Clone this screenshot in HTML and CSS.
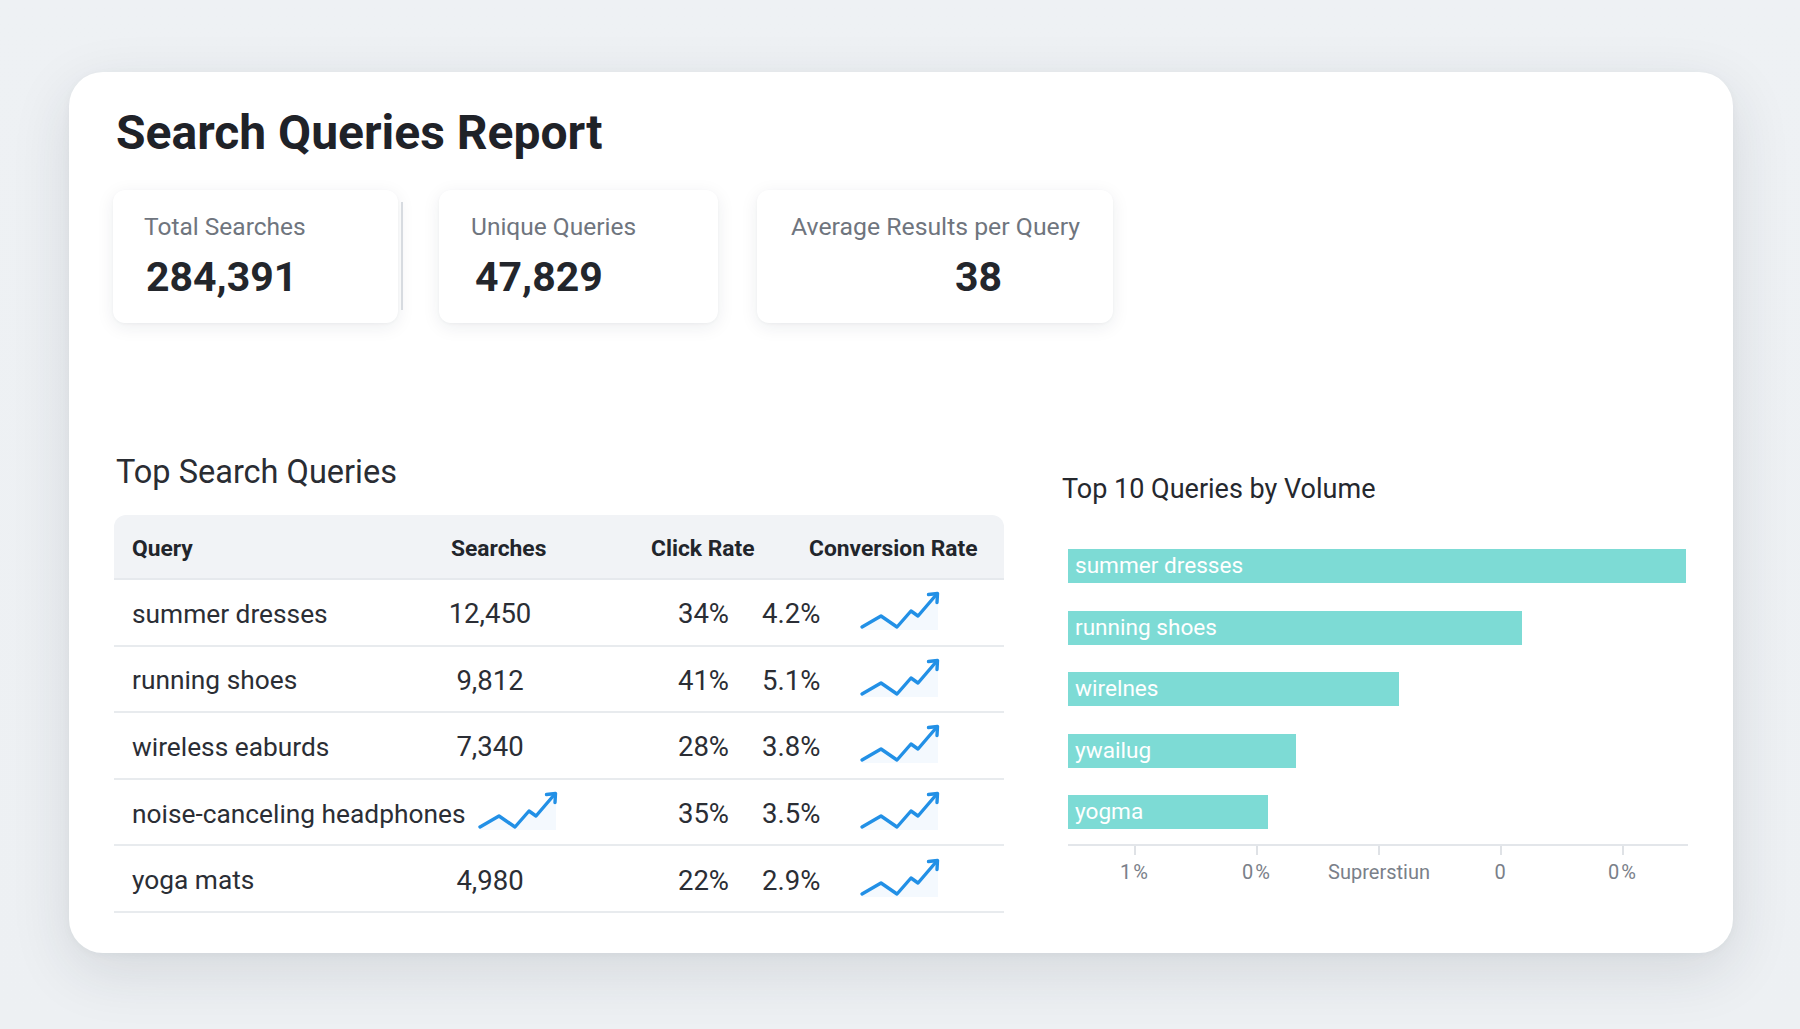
FILE: index.html
```html
<!DOCTYPE html>
<html lang="en">
<head>
<meta charset="utf-8">
<title>Search Queries Report</title>
<link rel="stylesheet" href="styles.css">
</head>
<body>
<div class="page">
  <main class="report">
    <h1 class="title">Search Queries Report</h1>

    <section class="stats">
      <div class="stat stat-total">
        <div class="stat-label">Total Searches</div>
        <div class="stat-value">284,391</div>
      </div>
      <div class="stat-divider"></div>
      <div class="stat stat-unique">
        <div class="stat-label">Unique Queries</div>
        <div class="stat-value stat-value-unique">47,829</div>
      </div>
      <div class="stat stat-avg">
        <div class="stat-label">Average Results per Query</div>
        <div class="stat-value stat-value-avg">38</div>
      </div>
    </section>

    <section class="lower">
      <div class="table-col">
        <h2 class="section-title">Top Search Queries</h2>
        <div class="table">
          <div class="thead">
            <div>Query</div>
            <div>Searches</div>
            <div>Click Rate</div>
            <div>Conversion Rate</div>
          </div>

          <div class="row">
            <div class="c-query">summer dresses</div>
            <div class="c-num c-searches">12,450</div>
            <div class="c-num c-click">34%</div>
            <div class="c-num c-conv">4.2%</div>
            <div class="c-spark">
              <svg class="spark" viewBox="0 0 80 40" width="80" height="40"><path class="spark-fill" d="M2 35 L21 24 L37 35 L51 19 L58 24 L76 3 L78 3 L78 38 L2 38 Z"/><path class="spark-line" d="M2 35 L21 24 L37 35 L51 19 L58 24 L76 3"/><path class="spark-line" d="M68.5 2.5 L77.5 1.5 L77 10.5"/></svg>
            </div>
          </div>

          <div class="row">
            <div class="c-query">running shoes</div>
            <div class="c-num c-searches">9,812</div>
            <div class="c-num c-click">41%</div>
            <div class="c-num c-conv">5.1%</div>
            <div class="c-spark">
              <svg class="spark" viewBox="0 0 80 40" width="80" height="40"><path class="spark-fill" d="M2 35 L21 24 L37 35 L51 19 L58 24 L76 3 L78 3 L78 38 L2 38 Z"/><path class="spark-line" d="M2 35 L21 24 L37 35 L51 19 L58 24 L76 3"/><path class="spark-line" d="M68.5 2.5 L77.5 1.5 L77 10.5"/></svg>
            </div>
          </div>

          <div class="row">
            <div class="c-query">wireless eaburds</div>
            <div class="c-num c-searches">7,340</div>
            <div class="c-num c-click">28%</div>
            <div class="c-num c-conv">3.8%</div>
            <div class="c-spark">
              <svg class="spark" viewBox="0 0 80 40" width="80" height="40"><path class="spark-fill" d="M2 35 L21 24 L37 35 L51 19 L58 24 L76 3 L78 3 L78 38 L2 38 Z"/><path class="spark-line" d="M2 35 L21 24 L37 35 L51 19 L58 24 L76 3"/><path class="spark-line" d="M68.5 2.5 L77.5 1.5 L77 10.5"/></svg>
            </div>
          </div>

          <div class="row">
            <div class="c-query c-query-wide">
              <span>noise-canceling headphones</span>
              <svg class="spark" viewBox="0 0 80 40" width="80" height="40"><path class="spark-fill" d="M2 35 L21 24 L37 35 L51 19 L58 24 L76 3 L78 3 L78 38 L2 38 Z"/><path class="spark-line" d="M2 35 L21 24 L37 35 L51 19 L58 24 L76 3"/><path class="spark-line" d="M68.5 2.5 L77.5 1.5 L77 10.5"/></svg>
            </div>
            <div class="c-num c-click">35%</div>
            <div class="c-num c-conv">3.5%</div>
            <div class="c-spark">
              <svg class="spark" viewBox="0 0 80 40" width="80" height="40"><path class="spark-fill" d="M2 35 L21 24 L37 35 L51 19 L58 24 L76 3 L78 3 L78 38 L2 38 Z"/><path class="spark-line" d="M2 35 L21 24 L37 35 L51 19 L58 24 L76 3"/><path class="spark-line" d="M68.5 2.5 L77.5 1.5 L77 10.5"/></svg>
            </div>
          </div>

          <div class="row">
            <div class="c-query">yoga mats</div>
            <div class="c-num c-searches">4,980</div>
            <div class="c-num c-click">22%</div>
            <div class="c-num c-conv">2.9%</div>
            <div class="c-spark">
              <svg class="spark" viewBox="0 0 80 40" width="80" height="40"><path class="spark-fill" d="M2 35 L21 24 L37 35 L51 19 L58 24 L76 3 L78 3 L78 38 L2 38 Z"/><path class="spark-line" d="M2 35 L21 24 L37 35 L51 19 L58 24 L76 3"/><path class="spark-line" d="M68.5 2.5 L77.5 1.5 L77 10.5"/></svg>
            </div>
          </div>
        </div>
      </div>

      <div class="chart-col">
        <h2 class="chart-title">Top 10 Queries by Volume</h2>
        <div class="bars">
          <div class="bar" style="width:618px">summer dresses</div>
          <div class="bar" style="width:454px">running shoes</div>
          <div class="bar" style="width:331px">wirelnes</div>
          <div class="bar" style="width:228px">ywailug</div>
          <div class="bar" style="width:200px">yogma</div>
        </div>
        <div class="axis">
          <div class="tick"><span class="tick-mark"></span><span class="tick-label">1%</span></div>
          <div class="tick"><span class="tick-mark"></span><span class="tick-label">0%</span></div>
          <div class="tick"><span class="tick-mark"></span><span class="tick-label tick-word">Suprerstiun</span></div>
          <div class="tick"><span class="tick-mark"></span><span class="tick-label">0</span></div>
          <div class="tick"><span class="tick-mark"></span><span class="tick-label">0%</span></div>
        </div>
      </div>
    </section>
  </main>
</div>
</body>
</html>
```

FILE: styles.css
```css
* {
  box-sizing: border-box;
}

html, body {
  margin: 0;
  padding: 0;
}

body {
  width: 1800px;
  height: 1029px;
  overflow: hidden;
  background: linear-gradient(180deg, #eef1f4 0%, #edf0f3 100%);
  font-family: Roboto, "Liberation Sans", Arial, sans-serif;
  color: #202329;
}

.page {
  padding: 72px 0 0 69px;
}

.report {
  width: 1664px;
  height: 881px;
  background: #ffffff;
  border-radius: 34px;
  box-shadow: 0 18px 60px rgba(30, 40, 60, 0.12), 0 2px 8px rgba(30, 40, 60, 0.04);
  padding: 32px 45px 0 44px;
}

.title {
  margin: 0 0 28px 3px;
  font-size: 48px;
  line-height: 57.6px;
  font-weight: 700;
  color: #1f2228;
}

/* stats */
.stats {
  display: flex;
  align-items: center;
}

.stat {
  height: 133px;
  background: #ffffff;
  border-radius: 12px;
  box-shadow: 0 4px 18px rgba(30, 40, 60, 0.08), 0 1px 3px rgba(30, 40, 60, 0.04);
  padding: 23px 0 0 31px;
}

.stat-total {
  width: 285px;
}

.stat-unique {
  width: 279px;
  margin-right: 39px;
  padding-left: 32px;
}

.stat-avg {
  width: 356px;
  padding-left: 34px;
}

.stat-divider {
  width: 2px;
  height: 108px;
  background: #d7dbe0;
  margin: 0 36px 0 3px;
}

.stat-label {
  font-size: 24.5px;
  line-height: 28.8px;
  color: #6f757e;
}

.stat-avg .stat-label {
  font-size: 24.8px;
}

.stat-value {
  margin-top: 12px;
  font-size: 41px;
  line-height: 48px;
  font-weight: 700;
  color: #23262c;
  padding-left: 2px;
}

.stat-value-unique {
  padding-left: 4px;
}

.stat-value-avg {
  padding-left: 164px;
}

/* lower section */
.lower {
  display: flex;
  margin-top: 130px;
  gap: 59px;
}

.table-col {
  width: 891px;
}

.section-title {
  margin: 0 0 24px 3px;
  font-size: 32.5px;
  line-height: 38.4px;
  font-weight: 400;
  color: #2a2d33;
}

.table {
  margin-left: 1px;
  width: 890px;
}

.thead {
  height: 65px;
  background: #f1f3f6;
  border-radius: 12px 12px 0 0;
  border-bottom: 2px solid #e6e9ed;
  display: grid;
  grid-template-columns: 319px 200px 158px 1fr;
  align-items: center;
  padding: 3px 0 0 18px;
  font-size: 22.8px;
  font-weight: 700;
  color: #22252b;
}

.row {
  height: 66.6px;
  border-bottom: 2px solid #e8ebee;
  display: grid;
  grid-template-columns: 291px 134px 172px 131px 80px;
  align-items: center;
  padding: 3px 0 0 18px;
  font-size: 26.3px;
  color: #2b2e35;
  white-space: nowrap;
}

.c-num {
  font-size: 27.5px;
}

.c-searches {
  text-align: center;
}

.c-click {
  text-align: right;
}

.c-conv {
  padding-left: 33px;
}

.c-spark {
  display: flex;
  align-items: center;
  margin-top: -3px;
}

.c-query-wide {
  grid-column: span 2;
  display: flex;
  align-items: center;
  gap: 13px;
}

.c-query-wide .spark {
  margin-top: -3px;
}

.spark {
  display: block;
  overflow: visible;
  flex: none;
}

.spark-line {
  fill: none;
  stroke: #2290e6;
  stroke-width: 3.4;
  stroke-linecap: round;
  stroke-linejoin: round;
}

.spark-fill {
  fill: #2290e6;
  opacity: 0.05;
}

/* chart */
.chart-col {
  width: 625px;
  padding-top: 20px;
}

.chart-title {
  margin: 0 0 44px -1px;
  font-size: 27px;
  line-height: 32.4px;
  font-weight: 400;
  color: #25282e;
}

.bars {
  display: flex;
  flex-direction: column;
  gap: 27.5px;
  padding-left: 5px;
}

.bar {
  height: 34px;
  background: #7ddbd5;
  color: #ffffff;
  font-size: 22.6px;
  line-height: 34px;
  padding-left: 7px;
  white-space: nowrap;
}

.axis {
  margin: 15px 0 0 5px;
  width: 620px;
  border-top: 2px solid #e3e6ea;
  display: flex;
  padding-left: 6px;
}

.tick {
  width: 122px;
  display: flex;
  flex-direction: column;
  align-items: center;
}

.tick-mark {
  width: 2px;
  height: 9px;
  background: #dfe2e6;
}

.tick-label {
  margin-top: 5px;
  font-size: 20px;
  line-height: 24px;
  color: #7a8089;
  letter-spacing: 2px;
}

.tick-word {
  letter-spacing: 0;
}
```
